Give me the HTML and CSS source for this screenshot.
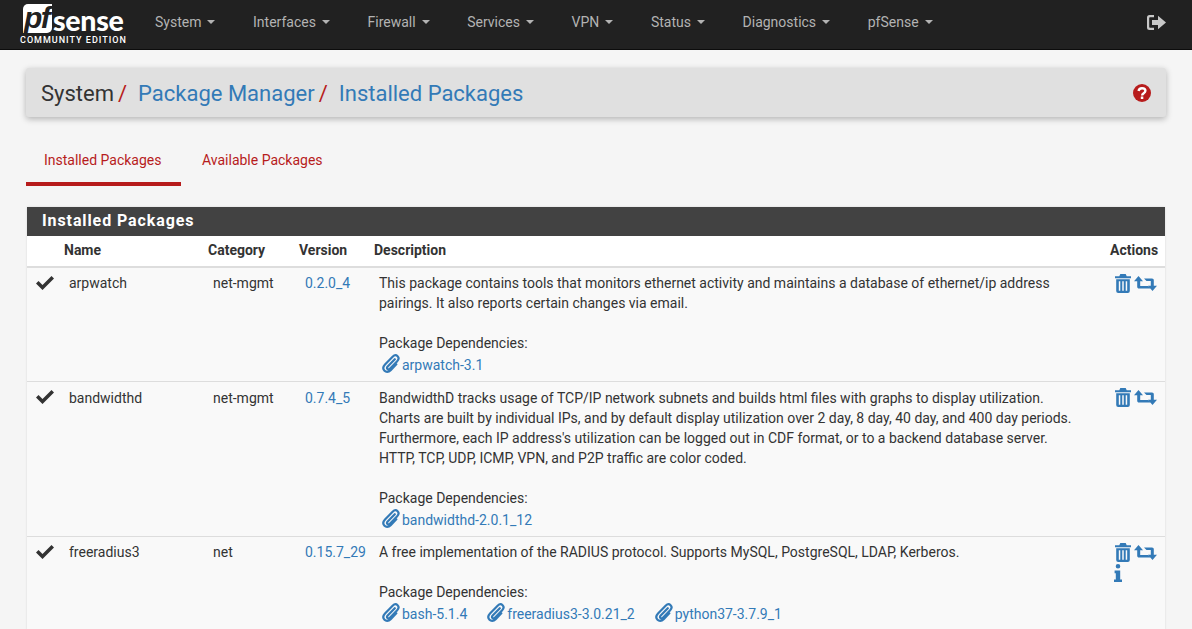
FILE: index.html
```html
<!DOCTYPE html>
<html lang="en">
<head>
<meta charset="utf-8">
<title>System / Package Manager / Installed Packages</title>
<link rel="stylesheet" href="styles.css">
</head>
<body>
<svg class="defs" width="0" height="0" aria-hidden="true">
  <defs>
    <symbol id="trash" viewBox="0 0 16 19"><path fill="currentColor" fill-rule="evenodd" d="M5.300 0h5.400l1 2.300H16v1.900H0V2.300h4.300zM1.200 5.200h13.600V17a2 2 0 0 1-2 2H3.200a2 2 0 0 1-2-2zM3.800 7.200v9.600h1.500V7.200zM7.250 7.200v9.600h1.500V7.200zM10.700 7.200v9.600h1.500V7.200z"/></symbol>
    <symbol id="retweet" viewBox="0 0 23 15"><path fill="currentColor" d="M4.500 0L9 5.200H6.200V10H14l2.500 2.500H5c-1.100 0-1.800-.7-1.800-1.800V5.200H0zM10 2.500h8c1.100 0 1.800.7 1.800 1.800v5.500H23L18.500 15 14 9.800h2.800V5h-4.300z"/></symbol>
    <symbol id="clip" viewBox="0 0 18 19"><path fill="none" stroke="currentColor" stroke-width="2.200" stroke-linecap="round" stroke-linejoin="round" d="M12.800 5.200L5.700 12.600c-.9 1-.7 1.900-.2 2.400s1.500.7 2.400-.2l7.300-7.600c1.800-1.900 1.500-3.900.4-5s-3.200-1.300-5 .5L3 10.400c-2.300 2.500-1.800 5-.5 6.300s3.800 1.800 6.200-.6l5.600-5.800"/></symbol>
    <symbol id="check" viewBox="0 0 18 14"><path fill="currentColor" d="M6.500 14L0 7.500l2.500-2.500 4 4L15.500 0 18 2.500z"/></symbol>
    <symbol id="info" viewBox="0 0 8 18"><path fill="currentColor" d="M4 0a2.300 2.300 0 1 1 0 4.600A2.300 2.300 0 0 1 4 0zM.6 6.600h5.600v8.800H8V18H0v-2.600h1.800V9.200H.6z"/></symbol>
  </defs>
</svg>

<nav class="navbar">
  <a class="brand" href="#">
    <span class="brand-top"><span class="brand-pf">pf</span><span class="brand-sense">sense</span></span>
    <span class="brand-sub">COMMUNITY EDITION</span>
  </a>
  <ul class="menu">
    <li>System<i class="caret"></i></li>
    <li>Interfaces<i class="caret"></i></li>
    <li>Firewall<i class="caret"></i></li>
    <li>Services<i class="caret"></i></li>
    <li>VPN<i class="caret"></i></li>
    <li>Status<i class="caret"></i></li>
    <li>Diagnostics<i class="caret"></i></li>
    <li>pfSense<i class="caret"></i></li>
  </ul>
  <svg class="logout" viewBox="0 0 19 15" width="19" height="15" aria-label="Logout"><path fill="#c8c8c8" d="M2.500 0H7v2.200H3c-.5 0-.8.300-.8.800v9c0 .5.300.8.800.8h4V15H2.500A2.500 2.500 0 0 1 0 12.500v-10A2.500 2.500 0 0 1 2.500 0zM11 .8L19 7.500 11 14.200V10H5V5h6z"/></svg>
</nav>

<main class="page">
  <header class="crumbs">
    <h1><span>System</span><em>/</em><a href="#">Package Manager</a><em>/</em><a href="#">Installed Packages</a></h1>
    <svg class="help" viewBox="0 0 18 18" width="18" height="18" aria-label="Help"><circle cx="9" cy="9" r="9" fill="#b71c1c"/><path fill="none" stroke="#fff" stroke-width="2.400" d="M5.600 7c.2-1.900 1.500-2.800 3.400-2.800 2 0 3.400 1 3.400 2.600 0 2.500-3.300 2.300-3.300 4.700"/><rect x="7.800" y="12.500" width="2.500" height="2.500" fill="#fff"/></svg>
  </header>

  <ul class="tabs">
    <li class="tab active">Installed Packages</li>
    <li class="tab">Available Packages</li>
  </ul>

  <section class="panel">
    <h2 class="panel-title">Installed Packages</h2>
    <table class="pkgs">
      <colgroup>
        <col class="c-check"><col class="c-name"><col class="c-cat"><col class="c-ver"><col class="c-desc"><col class="c-act">
      </colgroup>
      <thead>
        <tr><th></th><th class="th-name">Name</th><th>Category</th><th>Version</th><th>Description</th><th class="r">Actions</th></tr>
      </thead>
      <tbody>
        <tr>
          <td class="chk"><svg class="ic-check"><use href="#check"/></svg></td>
          <td>arpwatch</td><td>net-mgmt</td><td class="ver"><a href="#">0.2.0_4</a></td>
          <td class="desc">This package contains tools that monitors ethernet activity and maintains a database of ethernet/ip address pairings. It also reports certain changes via email.
            <p class="deps-label">Package Dependencies:</p>
            <div class="deps"><a href="#"><svg class="ic-clip"><use href="#clip"/></svg>arpwatch-3.1</a></div></td>
          <td class="acts"><svg class="ic-trash"><use href="#trash"/></svg><svg class="ic-retweet"><use href="#retweet"/></svg></td>
        </tr>
        <tr>
          <td class="chk"><svg class="ic-check"><use href="#check"/></svg></td>
          <td>bandwidthd</td><td>net-mgmt</td><td class="ver"><a href="#">0.7.4_5</a></td>
          <td class="desc">BandwidthD tracks usage of TCP/IP network subnets and builds html files with graphs to display utilization. Charts are built by individual IPs, and by default display utilization over 2 day, 8 day, 40 day, and 400 day periods. Furthermore, each IP address's utilization can be logged out in CDF format, or to a backend database server. HTTP, TCP, UDP, ICMP, VPN, and P2P traffic are color coded.
            <p class="deps-label">Package Dependencies:</p>
            <div class="deps"><a href="#"><svg class="ic-clip"><use href="#clip"/></svg>bandwidthd-2.0.1_12</a></div></td>
          <td class="acts"><svg class="ic-trash"><use href="#trash"/></svg><svg class="ic-retweet"><use href="#retweet"/></svg></td>
        </tr>
        <tr>
          <td class="chk"><svg class="ic-check"><use href="#check"/></svg></td>
          <td>freeradius3</td><td>net</td><td class="ver"><a href="#">0.15.7_29</a></td>
          <td class="desc">A free implementation of the RADIUS protocol. Supports MySQL, PostgreSQL, LDAP, Kerberos.
            <p class="deps-label">Package Dependencies:</p>
            <div class="deps"><a href="#"><svg class="ic-clip"><use href="#clip"/></svg>bash-5.1.4</a><a href="#"><svg class="ic-clip"><use href="#clip"/></svg>freeradius3-3.0.21_2</a><a href="#"><svg class="ic-clip"><use href="#clip"/></svg>python37-3.7.9_1</a></div></td>
          <td class="acts"><svg class="ic-trash"><use href="#trash"/></svg><svg class="ic-retweet"><use href="#retweet"/></svg><svg class="ic-info"><use href="#info"/></svg></td>
        </tr>
      </tbody>
    </table>
  </section>
</main>
</body>
</html>
```

FILE: styles.css
```css
* { box-sizing: border-box; }
html, body { height: 100%; }
body {
  margin: 0;
  background: #f5f5f5;
  color: #333;
  font-family: Roboto, "Liberation Sans", sans-serif;
  font-size: 14px;
  line-height: 20px;
  overflow: hidden;
}
a { color: #337ab7; text-decoration: none; }
.defs { position: absolute; }

.navbar {
  display: flex;
  align-items: center;
  height: 50px;
  background: #212121;
  border-bottom: 1px solid #0c0c0c;
  padding-left: 20px;
}
.brand { display: flex; flex-direction: column; width: 120px; flex: none; color: #fff; }
.brand-top { display: flex; align-items: flex-start; height: 29px; padding-left: 3px; }
.brand-pf {
  background: #fff;
  color: #212121;
  font: italic 700 30px/27px "Liberation Sans", sans-serif;
  width: 29px;
  height: 29px;
  padding-left: 1px;
  letter-spacing: -1.5px;
  border-radius: 5px 0 5px 0;
}
.brand-sense { font: 900 28.500px/25px Lato, "Liberation Sans", sans-serif; margin: 4px 0 0 1px; letter-spacing: -.3px; }
.brand-sub { font: 500 9px/11px Roboto, sans-serif; letter-spacing: 1px; white-space: nowrap; margin-top: 2px; }

.menu { display: flex; list-style: none; margin: 0 0 5px; padding: 0; flex: 1; color: #b3b3b3; }
.menu li { display: flex; align-items: center; padding: 0 15px; margin-right: 7.600px; }
.caret {
  display: inline-block;
  margin-left: 6px;
  border-top: 4px solid #b3b3b3;
  border-left: 4px solid transparent;
  border-right: 4px solid transparent;
}
.logout { margin-right: 26px; margin-bottom: 4px; }

.page { padding: 18px 26px 0; }
.crumbs {
  display: flex;
  align-items: center;
  justify-content: space-between;
  height: 49px;
  padding: 0 15px;
  background: #e0e0e0;
  border-radius: 3px;
  box-shadow: 0 2px 6px rgba(0,0,0,.28);
}
.crumbs h1 { margin: 2px 0 0; font-size: 22px; line-height: 30px; font-weight: 400; display: flex; }
.crumbs em { font-style: normal; color: #b71c1c; margin: 0 11px 0 4px; }

.tabs { display: flex; list-style: none; margin: 19px 0 0; padding: 0; height: 50px; }
.tab { color: #b71c1c; padding: 0 20px 0 18px; height: 50px; line-height: 48px; width: 155px; white-space: nowrap; }
.tab + .tab { width: auto; padding-left: 21px; }
.tab.active { border-bottom: 4px solid #b71c1c; }

.panel { margin: 21px 1px 0; background: #fff; width: 1138px; box-shadow: 0 0 2px rgba(0,0,0,.12); }
.panel-title {
  margin: 0;
  height: 29px;
  padding-left: 15px;
  background: #424242;
  color: #fff;
  font-size: 16px;
  font-weight: 700;
  line-height: 28px;
  letter-spacing: .9px;
}
.pkgs { width: 100%; border-collapse: collapse; table-layout: fixed; }
.c-check { width: 32px; } .c-name { width: 144px; } .c-cat { width: 91px; }
.c-ver { width: 75px; } .c-desc { width: auto; } .c-act { width: 60px; }
.pkgs th {
  height: 31px;
  padding: 0 5px 3px;
  text-align: left;
  font-weight: 700;
  background: #fff;
  border-bottom: 2px solid #ddd;
  white-space: nowrap;
}
.pkgs th.r { text-align: right; padding-right: 7px; }
.pkgs td { padding: 5px 10px 6px; vertical-align: top; border-top: 1px solid #ddd; background: #f9f9f9; }
.pkgs tbody tr:first-child td { border-top: 0; padding-top: 5px; }
.pkgs tbody tr:nth-child(2) td { padding-top: 6px; }
.pkgs td.ver { padding-left: 11px; padding-right: 0; }
.pkgs td.desc { padding-right: 25px; }
.pkgs td.chk, .pkgs tbody tr:first-child td.chk, .pkgs tbody tr:nth-child(2) td.chk { padding: 8px 0 0; }
.deps-label { margin: 20px 0 0; }
.deps { display: flex; gap: 17px; margin-top: 2px; height: 20px; }
.deps a { display: flex; align-items: center; }
.ic-check { width: 18px; height: 14px; color: #333; display: block; margin: 0 5px 0 auto; }
.ic-clip { width: 18px; height: 19px; margin: -3px 2px 0 3px; color: #337ab7; }
.pkgs td.acts, .pkgs tbody tr:first-child td.acts, .pkgs tbody tr:nth-child(2) td.acts { padding: 6px 0 0 10px; color: #337ab7; line-height: 0; font-size: 0; }
.ic-trash { width: 16px; height: 19px; margin-right: 3px; vertical-align: top; }
.ic-retweet { width: 23px; height: 15px; vertical-align: top; margin-top: 2px; }
.ic-info { display: block; width: 8px; height: 18px; margin: 2px 0 0 -1px; }
```
